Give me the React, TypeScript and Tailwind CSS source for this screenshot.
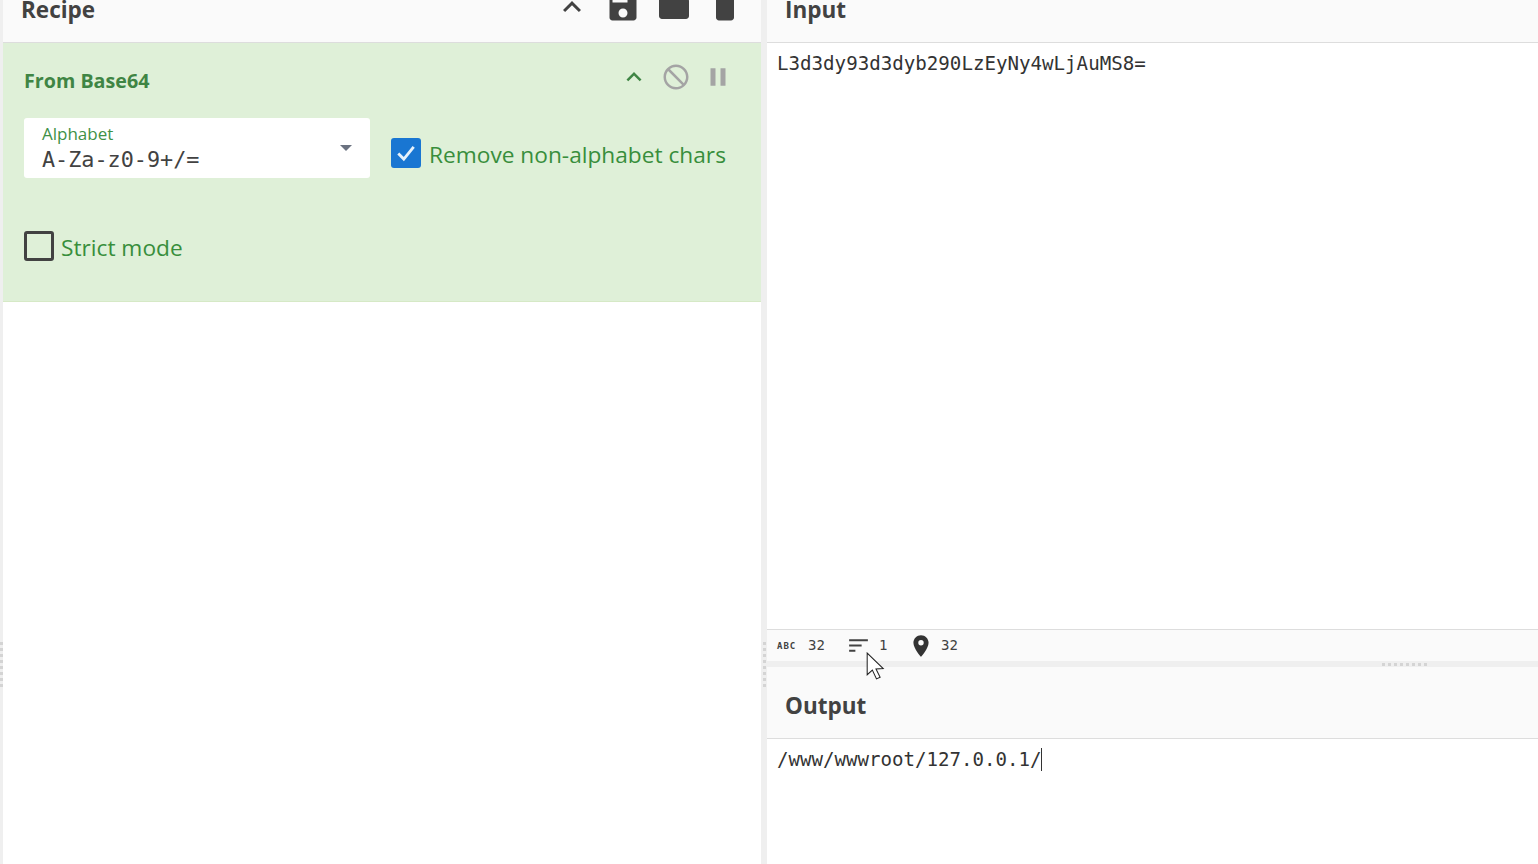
import React from 'react';

const ui = "font-['Open_Sans','Noto_Sans',sans-serif]";
const mono = "font-['DejaVu_Sans_Mono','Liberation_Mono',monospace]";

const Dots = ({ vertical }: { vertical?: boolean }) => (
  <div className={vertical ? 'flex flex-col gap-[3px]' : 'flex flex-row gap-[3px]'}>
    {[0, 1, 2, 3, 4, 5, 6, 7].map(i => (
      <div key={i} className="w-[3px] h-[3px] bg-[#d4d4d4]" />
    ))}
  </div>
);

const Gutter = ({ width }: { width: string }) => (
  <div className={`${width} shrink-0 h-full bg-[#efefef] flex items-center justify-center pt-[464px]`}>
    <Dots vertical />
  </div>
);

const HeaderIcons = () => (
  <div className="flex gap-[15px] text-[#424242] -mt-[11px]">
    <svg width="36" height="36" viewBox="0 0 24 24" fill="currentColor"><path d="M7.41 15.41L12 10.83l4.59 4.58L18 14l-6-6-6 6z" /></svg>
    <svg width="36" height="36" viewBox="0 0 24 24" fill="currentColor"><path d="M17 3H5c-1.11 0-2 .9-2 2v14c0 1.1.89 2 2 2h14c1.1 0 2-.9 2-2V7l-4-4zm-5 16c-1.66 0-3-1.34-3-3s1.34-3 3-3 3 1.34 3 3-1.34 3-3 3zm3-10H5V5h10v4z" /></svg>
    <svg width="36" height="36" viewBox="0 0 24 24" fill="currentColor"><path d="M10 4H4c-1.1 0-2 .9-2 2v12c0 1.1.9 2 2 2h16c1.1 0 2-.9 2-2V8c0-1.1-.9-2-2-2h-8l-2-2z" /></svg>
    <svg width="36" height="36" viewBox="0 0 24 24" fill="currentColor"><path d="M6 19c0 1.1.9 2 2 2h8c1.1 0 2-.9 2-2V7H6v12zM19 4h-3.5l-1-1h-5l-1 1H5v2h14V4z" /></svg>
  </div>
);

const Recipe = () => (
  <div className="w-[758px] shrink-0 h-full bg-white flex flex-col">
    <div className={`h-[43px] shrink-0 bg-[#fafafa] border-b border-[#dddddd] overflow-hidden flex justify-between pl-[18px] pr-[18px] ${ui}`}>
      <div className="text-[22.5px] font-bold leading-[30px] -mt-[5px] text-[#424242]">Recipe</div>
      <HeaderIcons />
    </div>
    <div className={`h-[259px] shrink-0 bg-[#dff0d8] border-b border-[#d6e9c6] pl-[21px] pr-[21px] pt-[24px] ${ui}`}>
      <div className="flex items-center justify-between h-[28px]">
        <div className="text-[19.7px] font-bold text-[#3f8544] leading-[28px]">From Base64</div>
        <div className="flex gap-[12px] items-center mr-[7px] -mt-[8px]">
          <svg width="30" height="30" viewBox="0 0 24 24" fill="#3f8544"><path d="M7.41 15.41L12 10.83l4.59 4.58L18 14l-6-6-6 6z" /></svg>
          <svg className="-scale-x-100" width="30" height="30" viewBox="0 0 24 24" fill="#a4a4a4"><path d="M12 2C6.48 2 2 6.48 2 12s4.48 10 10 10 10-4.48 10-10S17.52 2 12 2zM4 12c0-4.42 3.58-8 8-8 1.85 0 3.55.63 4.9 1.69L5.69 16.9C4.63 15.55 4 13.85 4 12zm8 8c-1.85 0-3.55-.63-4.9-1.69L18.31 7.1C19.37 8.45 20 10.15 20 12c0 4.42-3.58 8-8 8z" /></svg>
          <svg width="30" height="30" viewBox="0 0 24 24" fill="#a4a4a4"><path d="M6 19h4V5H6v14zm8-14v14h4V5h-4z" /></svg>
        </div>
      </div>
      <div className="flex mt-[23px]">
        <div className="w-[346px] h-[60px] shrink-0 bg-white rounded-[3px] pl-[18px] pr-[18px] pt-[4px] flex justify-between">
          <div>
            <div className="text-[17px] leading-[23px] text-[#3f9146]">Alphabet</div>
            <div className={`text-[21.8px] leading-[28px] mt-[1px] text-[#424242] ${mono}`}>A-Za-z0-9+/=</div>
          </div>
          <div className="w-0 h-0 mt-[23px] border-l-[6px] border-r-[6px] border-t-[6px] border-l-transparent border-r-transparent border-t-[#6b7280]" />
        </div>
        <div className="flex ml-[21px] gap-[8px] h-[60px] pt-[20px] whitespace-nowrap">
          <div className="w-[30px] h-[30px] rounded-[3px] bg-[#1976d2] flex items-center justify-center shrink-0">
            <svg width="22" height="22" viewBox="0 0 20 20" fill="none" stroke="#e6f1fb" strokeWidth="2.6"><path d="M3 10.5 L8 15.5 L17 4.5" /></svg>
          </div>
          <div className="text-[22.7px] leading-[32px] mt-[1px] text-[#388e3c]">Remove non-alphabet chars</div>
        </div>
      </div>
      <div className="flex gap-[7px] mt-[53px] h-[30px]">
        <div className="w-[30px] h-[30px] rounded-[3px] border-[3px] border-[#424242]" />
        <div className="text-[22.7px] leading-[32px] mt-[1px] text-[#388e3c]">Strict mode</div>
      </div>
    </div>
  </div>
);

const Status = () => (
  <div className={`h-[32px] shrink-0 bg-[#fafafa] border-t border-[#dddddd] flex items-center pl-[10px] text-[14px] text-[#424242] ${mono}`}>
    <span className="w-[20px] text-[9px] leading-[10px] font-bold tracking-[1px]">ABC</span>
    <span className="ml-[11px] w-[38px]">32</span>
    <svg width="25" height="25" viewBox="0 0 24 24" fill="#424242"><path d="M3 6h18v2H3zM3 11h12v2H3zM3 16h6v2H3z" /></svg>
    <span className="ml-[8px] w-[29px]">1</span>
    <svg width="26" height="26" viewBox="0 0 24 24" fill="#333333"><path d="M12 2C8.13 2 5 5.13 5 9c0 5.25 7 13 7 13s7-7.75 7-13c0-3.87-3.13-7-7-7zm0 9.5a2.5 2.5 0 0 1 0-5 2.5 2.5 0 0 1 0 5z" /></svg>
    <span className="ml-[7px]">32</span>
  </div>
);

const IO = () => (
  <div className="flex-1 h-full flex flex-col bg-white">
    <div className={`h-[43px] shrink-0 bg-[#fafafa] border-b border-[#dddddd] overflow-hidden pl-[18px] ${ui}`}>
      <div className="text-[22.5px] font-bold leading-[30px] -mt-[5px] text-[#424242]">Input</div>
    </div>
    <div className={`h-[586px] shrink-0 px-[10px] pt-[8px] text-[19.15px] leading-[26px] text-[#333333] ${mono}`}>
      L3d3dy93d3dyb290LzEyNy4wLjAuMS8=
    </div>
    <Status />
    <div className="h-[6px] shrink-0 bg-[#efefef] flex items-center justify-end pr-[111px]">
      <Dots />
    </div>
    <div className={`h-[72px] shrink-0 bg-[#fafafa] border-b border-[#dddddd] flex items-center pl-[18px] ${ui}`}>
      <div className="text-[22.5px] font-bold leading-[30px] mt-[8px] pb-[2px] text-[#424242]">Output</div>
    </div>
    <div className={`flex-1 px-[10px] pt-[8px] text-[19.1px] leading-[26px] text-[#333333] ${mono}`}>
      <span className="border-r border-[#333333]">/www/wwwroot/127.0.0.1/</span>
    </div>
  </div>
);

export default function App() {
  return (
    <div className="relative w-[1538px] h-[864px] overflow-hidden flex bg-white">
      <Gutter width="w-[3px]" />
      <Recipe />
      <Gutter width="w-[6px]" />
      <IO />
      <svg className="absolute left-[866px] top-[652px]" width="21" height="30" viewBox="0 0 20 29">
        <path d="M1 1 L1 22 L6 17.5 L10 26 L13.5 24.5 L9.5 16.5 L16.5 16 Z" fill="#ffffff" stroke="#222222" strokeWidth="1" />
      </svg>
    </div>
  );
}
